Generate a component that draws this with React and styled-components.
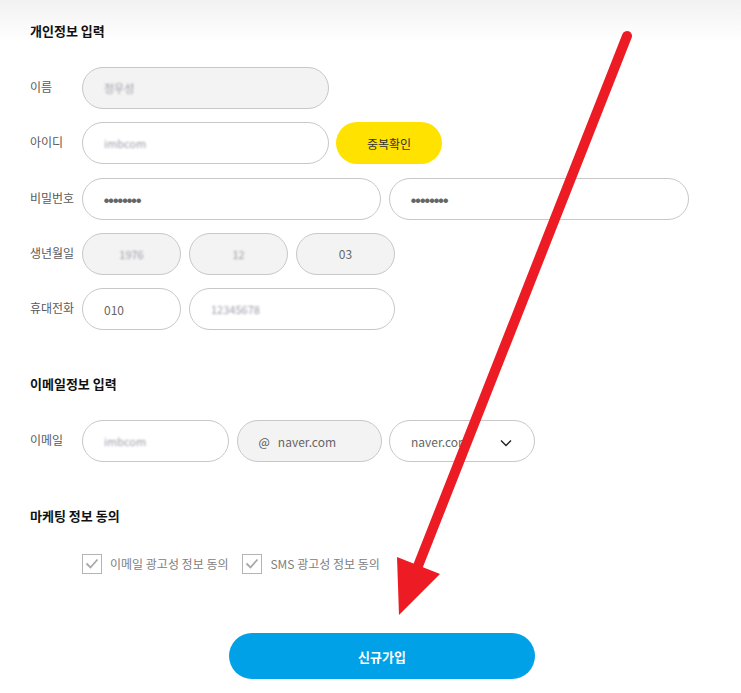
import React from 'react';
import styled, { createGlobalStyle } from 'styled-components';

const Global = createGlobalStyle`
  html, body { margin: 0; padding: 0; background: #fff; }
  body { font-family: "Noto Sans CJK KR", "Noto Sans", sans-serif; }
  * { box-sizing: border-box; }
`;

const Page = styled.div`
  position: relative;
  width: 741px;
  height: 693px;
  overflow: hidden;
  background: linear-gradient(#f2f2f2 0px, #ffffff 42px);
`;

const Form = styled.div`
  width: 734px;
  padding: 21px 0 0 30px;
  display: flex;
  flex-direction: column;
`;

const Section = styled.section`
  display: flex;
  flex-direction: column;
  & + & { margin-top: 44px; }
`;

const Heading = styled.h2`
  margin: 0 0 ${p => p.$mb || 26}px;
  font-size: 13px;
  line-height: 20px;
  font-weight: 700;
  color: #111;
`;

const Rows = styled.div`
  display: flex;
  flex-direction: column;
  gap: 13.3px;
`;

const Row = styled.div`
  display: flex;
  align-items: center;
  height: 42px;
`;

const Label = styled.div`
  width: 52px;
  flex: none;
  font-size: 12px;
  color: #5a5a5a;
  margin-top: -3px;
`;

const Fields = styled.div`
  display: flex;
  gap: ${p => p.$gap || 8}px;
`;

const Field = styled.div`
  width: ${p => p.$w}px;
  height: 42px;
  flex: none;
  border: 1px solid #c8c8c8;
  border-radius: 21px;
  background: ${p => (p.$filled ? '#f3f3f3' : '#fff')};
  display: flex;
  align-items: center;
  justify-content: ${p => (p.$center ? 'center' : 'flex-start')};
  padding: 0 ${p => (p.$center ? 0 : 21)}px;
  position: relative;
  font-size: 12px;
  color: #666;
`;

const Hidden = styled.span`
  color: #9a9aa8;
  filter: blur(1.1px);
  font-size: 11px;
`;

const Dots = styled.span`
  font-size: 5px;
  letter-spacing: -0.4px;
  color: #666;
  margin-top: 1px;
`;

const At = styled.span`
  margin-right: 8px;
  color: #555;
  font-size: 12px;
`;

const Chevron = styled.svg`
  position: absolute;
  right: 22px;
  top: 18px;
`;

const YellowButton = styled.button`
  width: 106px;
  height: 42px;
  border: none;
  border-radius: 21px;
  background: #ffe200;
  color: #333;
  font-family: inherit;
  font-size: 12px;
  padding: 0;
`;

const Checks = styled.div`
  display: flex;
  align-items: center;
  padding: 0 0 0 52px;
  gap: 14px;
`;

const CheckItem = styled.label`
  display: flex;
  align-items: center;
  gap: 8px;
  font-size: 12px;
  color: #808080;
  line-height: 20px;
`;

const Box = styled.span`
  width: 20px;
  height: 20px;
  border: 1.5px solid #b4b4b4;
  display: flex;
  align-items: center;
  justify-content: center;
  background: #fff;
`;

const Submit = styled.button`
  align-self: center;
  margin-top: 59px;
  width: 306px;
  height: 46px;
  border: none;
  border-radius: 23px;
  background: #00a1e6;
  color: #fff;
  font-family: inherit;
  font-size: 13px;
  font-weight: 700;
  padding: 0;
`;

const Overlay = styled.svg`
  position: absolute;
  left: 0;
  top: 0;
  pointer-events: none;
`;

const Check = () => (
  <Box>
    <svg width="14" height="12" viewBox="0 0 14 12">
      <path d="M1.5 5.5 L5.5 9.5 L12.5 1.5" fill="none" stroke="#a8a8a8" strokeWidth="1.8" />
    </svg>
  </Box>
);

export default function App() {
  return (
    <Page>
      <Global />
      <Form>
        <Section>
          <Heading>개인정보 입력</Heading>
          <Rows>
            <Row>
              <Label>이름</Label>
              <Field $w={247} $filled><Hidden>정우성</Hidden></Field>
            </Row>
            <Row>
              <Label>아이디</Label>
              <Fields $gap={7}>
                <Field $w={247}><Hidden>imbcom</Hidden></Field>
                <YellowButton>중복확인</YellowButton>
              </Fields>
            </Row>
            <Row>
              <Label>비밀번호</Label>
              <Fields>
                <Field $w={299}><Dots>●●●●●●●●</Dots></Field>
                <Field $w={300}><Dots>●●●●●●●●</Dots></Field>
              </Fields>
            </Row>
            <Row>
              <Label>생년월일</Label>
              <Fields>
                <Field $w={99} $filled $center><Hidden>1976</Hidden></Field>
                <Field $w={99} $filled $center><Hidden>12</Hidden></Field>
                <Field $w={99} $filled $center>03</Field>
              </Fields>
            </Row>
            <Row>
              <Label>휴대전화</Label>
              <Fields>
                <Field $w={99}>010</Field>
                <Field $w={206}><Hidden>12345678</Hidden></Field>
              </Fields>
            </Row>
          </Rows>
        </Section>

        <Section>
          <Heading>이메일정보 입력</Heading>
          <Row>
            <Label>이메일</Label>
            <Fields $gap={7.5}>
              <Field $w={147}><Hidden>imbcom</Hidden></Field>
              <Field $w={145} $filled><At>@</At>naver.com</Field>
              <Field $w={146}>
                naver.com
                <Chevron width="12" height="8" viewBox="0 0 12 8">
                  <path d="M1 1.5 L6 6.5 L11 1.5" fill="none" stroke="#222" strokeWidth="1.4" />
                </Chevron>
              </Field>
            </Fields>
          </Row>
        </Section>

        <Section>
          <Heading $mb={28}>마케팅 정보 동의</Heading>
          <Checks>
            <CheckItem><Check />이메일 광고성 정보 동의</CheckItem>
            <CheckItem><Check />SMS 광고성 정보 동의</CheckItem>
          </Checks>
        </Section>

        <Submit>신규가입</Submit>
      </Form>

      <Overlay width="741" height="693" viewBox="0 0 741 693">
        <line x1="627" y1="36" x2="418" y2="566" stroke="#ed1c24" strokeWidth="10" strokeLinecap="round" />
        <polygon points="397,557 440,574 399,615" fill="#ed1c24" />
      </Overlay>
    </Page>
  );
}
